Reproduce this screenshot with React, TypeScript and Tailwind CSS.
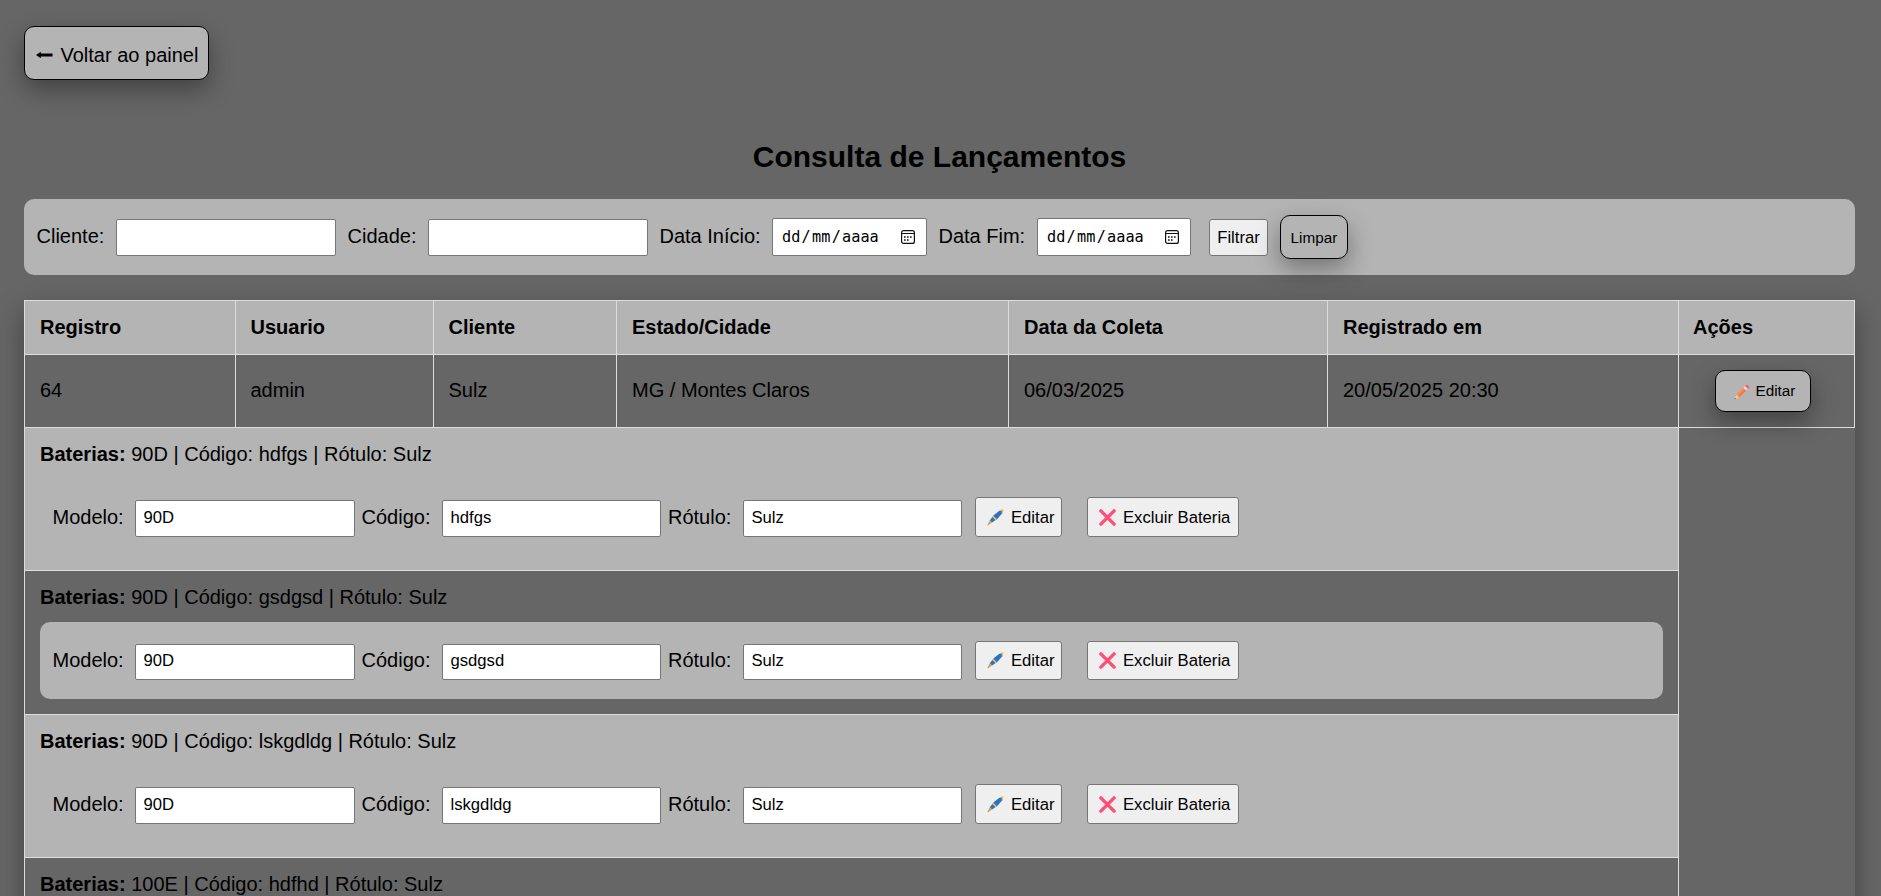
import React from "react";

const headers = [
  { label: "Registro", value: "64", width: "w-[211px] pl-[15px]" },
  { label: "Usuario", value: "admin", width: "w-[198px] pl-[14.5px]" },
  { label: "Cliente", value: "Sulz", width: "w-[183px] pl-[14.5px]" },
  { label: "Estado/Cidade", value: "MG / Montes Claros", width: "w-[392px] pl-[15px]" },
  { label: "Data da Coleta", value: "06/03/2025", width: "w-[319px] pl-[15px]" },
  { label: "Registrado em", value: "20/05/2025 20:30", width: "w-[351px] pl-[15px]" },
];

const batteries = [
  { model: "90D", code: "hdfgs", label: "Sulz", height: "h-[143px]", light: true, editable: true },
  { model: "90D", code: "gsdgsd", label: "Sulz", height: "h-[144px]", light: false, editable: true },
  { model: "90D", code: "lskgdldg", label: "Sulz", height: "h-[143px]", light: true, editable: true },
  { model: "100E", code: "hdfhd", label: "Sulz", height: "h-[144px]", light: false, editable: false },
];

const raised = "rounded-[10px] border border-black bg-[#b4b4b4] shadow-[0_10px_25px_rgba(0,0,0,0.35)]";

function ArrowIcon() {
  return (
    <svg className="h-[8px] w-[17px]" viewBox="0 0 17 8" fill="#000">
      <path d="M0 4 4.8 .8V2.5H16.5V5.5H4.8V7.2Z" />
    </svg>
  );
}

function PencilIcon() {
  return (
    <svg className="h-4 w-4" viewBox="0 0 16 16">
      <path d="M2.3 10.6 9.8 3.4 12.6 6.1 5.1 13.3Z" fill="#ff8b4b" />
      <path d="M3.8 12.1 11.3 4.8 12.6 6.1 5.1 13.3Z" fill="#f9773c" />
      <path d="M2.3 10.6 .4 15.4 5.1 13.3Z" fill="#f6c5a0" />
      <path d="M1 13.9.4 15.4 1.9 14.8Z" fill="#4b2b4a" />
      <path d="M9.3 3.8 11.2 2 14 4.7 12.2 6.5Z" fill="#e8dcec" />
      <path d="M11.1 2 12 1Q12.8 .3 13.6 1L15 2.4Q15.7 3.2 15 4L14.1 4.9Z" fill="#ff5d5d" />
    </svg>
  );
}

function PenIcon() {
  return (
    <svg className="h-[17px] w-[17px]" viewBox="0 0 17 17">
      <path d="M2.8 11.2Q6.6 5.2 12 1.9L15.6 .8 15.1 4.5Q11.2 10.2 5 13.6Z" fill="#2f72c4" />
      <path d="M2.8 11.2 .4 15.8 1 16.4 5 13.6Z" fill="#c9a75c" />
      <path d="M6.4 6.8 9.9 10.2 8.6 11.3 5.3 8Z" fill="#f2c14e" />
      <path d="M12.3 1.4 15.2 .2Q16.6 0 16.4 1.6L15.6 4.4 14.7 5.3 14.7 2Z" fill="#e9bd58" />
    </svg>
  );
}

function CrossIcon() {
  return (
    <svg className="h-[17px] w-[17px]" viewBox="0 0 17 17">
      <path d="M1.9 1.9 15.1 15.1M15.1 1.9 1.9 15.1" stroke="#ff4f78" strokeWidth="3.4" strokeLinecap="round" />
    </svg>
  );
}

function CalendarIcon() {
  return (
    <svg className="h-[14px] w-[14px]" viewBox="0 0 14 14" fill="none" stroke="#111">
      <rect x=".6" y=".6" width="12.8" height="12.8" rx="2" strokeWidth="1.2" />
      <path d="M.5 3.5H13.5" />
      <path d="M6 7H7.6M9 7H10.6M3 7H4.6M3 10H4.6M6 10H7.6" strokeWidth="1.6" />
    </svg>
  );
}

function DateField({ width }: { width: string }) {
  return (
    <div className={`flex h-[38px] items-center rounded-[2px] border border-[#767676] bg-white pl-[9px] pr-[11px] font-['DejaVu_Sans_Mono',monospace] text-[15.2px] ${width}`}>
      <span>dd</span>
      <span className="px-[1.3px]">/</span>
      <span>mm</span>
      <span className="px-[1.3px]">/</span>
      <span>aaaa</span>
      <span className="ml-auto"><CalendarIcon /></span>
    </div>
  );
}

function BatteryRow({ model, code, label, height, light, editable }: (typeof batteries)[number]) {
  const field = `rounded-[2px] border border-[#767676] bg-white pb-[2px] pl-[7.5px] text-[16.67px] outline-none ${light ? "h-[37px]" : "h-[36px]"}`;
  const action = `flex items-center rounded-[3px] border border-[#767676] bg-[#efefef] text-[16.67px] ${light ? "h-[40px]" : "h-[39px]"}`;
  const caption = `leading-[23px] ${light ? "pt-[9px]" : "pt-[8px]"}`;
  return (
    <div className={`w-[1654px] border-b border-r border-[#ddd] px-[15px] ${height} ${light ? "bg-[#b4b4b4]" : ""}`}>
      <p className="h-[51px] pt-[15px] leading-[23px]">
        <strong>Baterias:</strong> {model} | Código: {code} | Rótulo: {label}
      </p>
      {editable && (
        <form className={`flex h-[77px] rounded-[10px] bg-[#b4b4b4] pl-[12.5px] ${light ? "pt-[18px]" : "pt-[19px]"}`}>
          <label className={`w-[82.5px] ${caption}`}>Modelo:</label>
          <input className={`w-[220px] ${field} mt-[3px]`} defaultValue={model} />
          <label className={`ml-[6.5px] w-[80.5px] ${caption}`}>Código:</label>
          <input className={`w-[219px] ${field} mt-[3px]`} defaultValue={code} />
          <label className={`ml-[7px] w-[75px] ${caption}`}>Rótulo:</label>
          <input className={`w-[219px] ${field} mt-[3px]`} defaultValue={label} />
          <button type="button" className={`ml-[13px] w-[87px] gap-[7.5px] pl-[10.5px] ${action}`}>
            <PenIcon />Editar
          </button>
          <button type="button" className={`ml-[25px] w-[152px] gap-[7.5px] whitespace-nowrap pl-[10.5px] ${action}`}>
            <CrossIcon />Excluir Bateria
          </button>
        </form>
      )}
    </div>
  );
}

export default function App() {
  const input = "h-[37px] rounded-[2px] border border-[#767676] bg-white px-[8px] outline-none";
  return (
    <div className="h-[896px] overflow-hidden bg-[#666] px-[24px] pt-[26px] font-['Liberation_Sans',Arial,sans-serif] text-[20px] text-black">
      <a className={`flex h-[54px] w-[185px] items-center gap-[7.5px] whitespace-nowrap pl-[11px] pt-[3px] ${raised}`}>
        <ArrowIcon />Voltar ao painel
      </a>
      <h2 className="mt-[60px] h-[59px] pr-[2px] text-center text-[30px] font-bold leading-[34px]">Consulta de Lançamentos</h2>

      <form className="flex h-[76px] w-[1831px] items-center rounded-[10px] bg-[#b4b4b4] pl-[12.5px]">
        <label className="w-[79.5px] pb-[2px]">Cliente:</label>
        <input className={`w-[220px] ${input}`} />
        <label className="ml-[11.5px] w-[80.5px] pb-[2px]">Cidade:</label>
        <input className={`w-[220px] ${input}`} />
        <label className="ml-[11.5px] w-[112.5px] pb-[2px]">Data Início:</label>
        <DateField width="w-[155px]" />
        <label className="ml-[11.5px] w-[98.5px] pb-[2px]">Data Fim:</label>
        <DateField width="w-[154px]" />
        <button type="button" className="ml-[18px] h-[37px] w-[59px] rounded-[3px] border border-[#767676] bg-[#efefef] text-[16.67px]">Filtrar</button>
        <button type="button" className={`ml-[12px] h-[44px] w-[68px] pt-[2px] text-[15.3px] ${raised}`}>Limpar</button>
      </form>

      <section className="mt-[25px] w-[1831px] border-l border-t border-[#ddd] shadow-[0_10px_25px_rgba(0,0,0,0.35)]">
        <div className="flex h-[54px] bg-[#b4b4b4] font-bold">
          {headers.map((h) => (
            <div key={h.label} className={`flex items-center border-b border-r border-[#ddd] pb-[2px] ${h.width}`}>{h.label}</div>
          ))}
          <div className="flex w-[176px] items-center border-b border-r border-[#ddd] pb-[2px] pl-[14px]">Ações</div>
        </div>
        <div className="flex h-[73px]">
          {headers.map((h) => (
            <div key={h.label} className={`flex items-center border-b border-r border-[#ddd] pb-[3px] ${h.width}`}>{h.value}</div>
          ))}
          <div className="flex w-[176px] items-center border-b border-r border-[#ddd] pl-[36px]">
            <button type="button" className={`flex h-[42px] w-[96px] items-center gap-[6px] pl-[17.5px] pt-px text-[15.3px] ${raised}`}>
              <PencilIcon />Editar
            </button>
          </div>
        </div>
        {batteries.map((b) => (
          <BatteryRow key={b.code} {...b} />
        ))}
      </section>
    </div>
  );
}
